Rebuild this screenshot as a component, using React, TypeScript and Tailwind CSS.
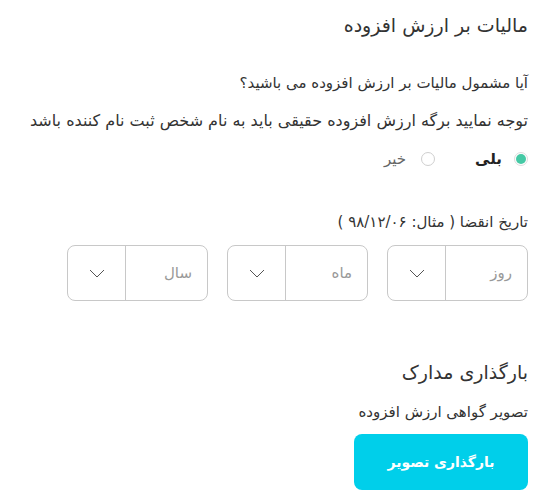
import React from 'react';

const Chevron = () => (
  <svg width="16" height="9" viewBox="0 0 16 9" fill="none" stroke="#555" strokeWidth="1">
    <path d="M1 1l7 7 7-7" />
  </svg>
);

const DateSelect = ({ label }: { label: string }) => (
  <div className="flex h-[56px] w-[141px] rounded-[8px] border border-[#c8c8c8]">
    <div className="flex flex-1 items-center pr-[15px] text-[15px] text-[#999]">{label}</div>
    <div className="flex w-[58px] items-center justify-center border-r border-[#c8c8c8]">
      <Chevron />
    </div>
  </div>
);

export default function App() {
  return (
    <div dir="rtl" className="min-h-[498px] bg-white pr-[29px] text-[#333]" style={{ fontFamily: '"DejaVu Sans", sans-serif' }}>
      <h2 className="pt-[10px] text-[19px] leading-[30px]">مالیات بر ارزش افزوده</h2>

      <p className="mt-[32px] text-[15px] leading-[22px]">آیا مشمول مالیات بر ارزش افزوده می باشید؟</p>
      <p className="mt-[16px] text-[16px] leading-[22px]">توجه نمایید برگه ارزش افزوده حقیقی باید به نام شخص ثبت نام کننده باشد</p>

      <div className="mt-[16px] flex items-center text-[15px] leading-[22px]">
        <label className="flex items-center gap-[12px]">
          <span className="flex h-[14px] w-[14px] items-center justify-center rounded-full border border-[#ddd]">
            <span className="h-[10px] w-[10px] rounded-full bg-[#45c9a5]" />
          </span>
          <span className="font-bold text-[#222]">بلی</span>
        </label>
        <label className="mr-[40px] flex items-center gap-[15px]">
          <span className="h-[14px] w-[14px] rounded-full border border-[#cfcfcf]" />
          <span className="text-[#666]">خیر</span>
        </label>
      </div>

      <p className="mt-[41px] text-[15px] leading-[22px]">تاریخ انقضا ( مثال: ۹۸/۱۲/۰۶ )</p>
      <div className="mt-[12px] flex gap-[19px]">
        <DateSelect label="روز" />
        <DateSelect label="ماه" />
        <DateSelect label="سال" />
      </div>

      <h3 className="mt-[57px] text-[19px] leading-[28px]">بارگذاری مدارک</h3>
      <p className="mt-[15px] text-[15px] leading-[22px]">تصویر گواهی ارزش افزوده</p>
      <button className="mt-[11px] flex h-[56px] w-[174px] items-center justify-center rounded-[8px] bg-[#00cfea] text-[14px] font-bold text-white">
        بارگذاری تصویر
      </button>
    </div>
  );
}
